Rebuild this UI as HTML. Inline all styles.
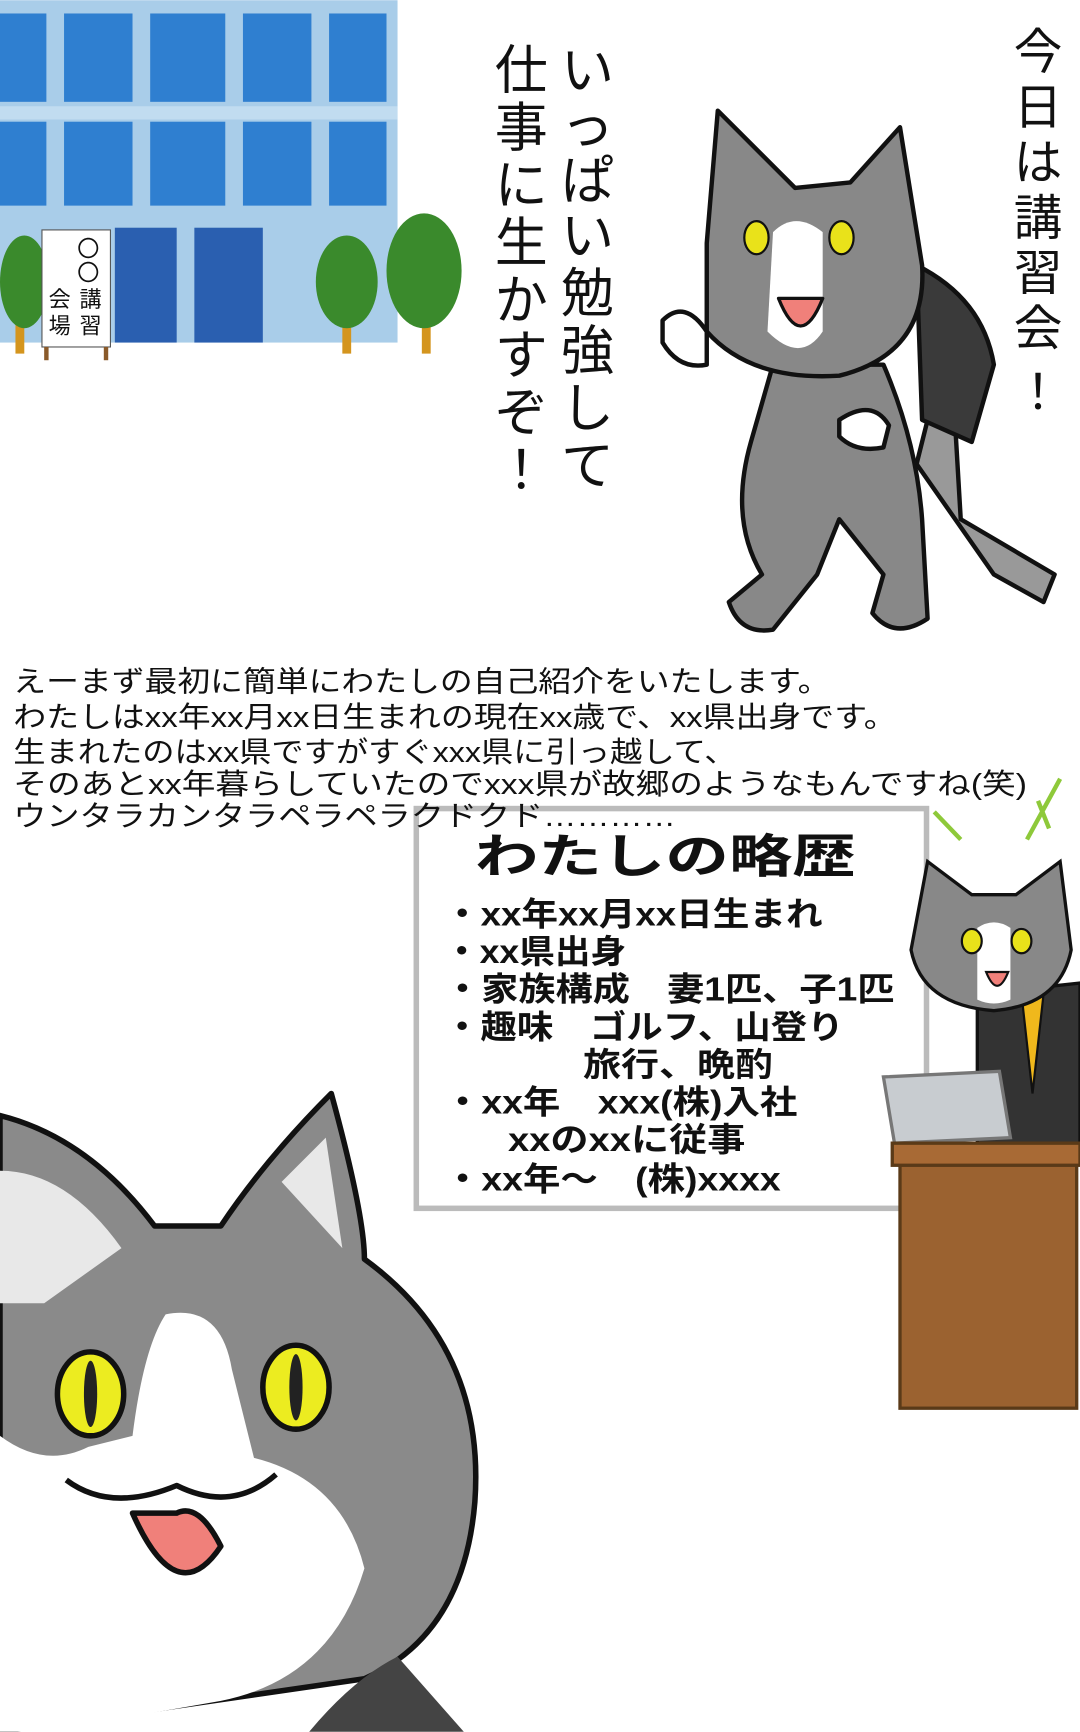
<!DOCTYPE html>
<html><head><meta charset="utf-8"><style>
html,body{margin:0;padding:0;background:#fff;width:1080px;height:1732px;overflow:hidden}
svg{display:block}
text{font-family:"Liberation Sans","Noto Sans CJK JP",sans-serif;fill:#111}
</style></head><body>
<svg width="1080" height="1732" viewBox="0 0 978 1568" xmlns="http://www.w3.org/2000/svg">
<!-- building -->
<rect x="0" y="0" width="360" height="310" fill="#a9cde9"/>
<g fill="#2f7fd0">
<rect x="0" y="12" width="42" height="80"/><rect x="58" y="12" width="62" height="80"/><rect x="136" y="12" width="68" height="80"/><rect x="220" y="12" width="62" height="80"/><rect x="298" y="12" width="52" height="80"/>
<rect x="0" y="110" width="42" height="76"/><rect x="58" y="110" width="62" height="76"/><rect x="136" y="110" width="68" height="76"/><rect x="220" y="110" width="62" height="76"/><rect x="298" y="110" width="52" height="76"/>
</g>
<rect x="0" y="96" width="360" height="12" fill="#c1dcf0"/>
<rect x="104" y="206" width="56" height="104" fill="#2a5fb0"/><rect x="176" y="206" width="62" height="104" fill="#2a5fb0"/>
<g fill="#d4951e"><rect x="14" y="260" width="8" height="60"/><rect x="310" y="260" width="8" height="60"/><rect x="382" y="260" width="8" height="60"/></g>
<g fill="#3a8a2c">
<ellipse cx="22" cy="255" rx="22" ry="42"/><ellipse cx="314" cy="255" rx="28" ry="42"/><ellipse cx="384" cy="245" rx="34" ry="52"/>
</g>
<rect x="38" y="208" width="62" height="106" fill="#fff" stroke="#555" stroke-width="1"/>
<rect x="40" y="314" width="4" height="12" fill="#8a5a2a"/><rect x="94" y="314" width="4" height="12" fill="#8a5a2a"/>
<g font-size="20"><text x="70" y="232">〇</text><text x="70" y="254">〇</text><text x="72" y="278">講</text><text x="72" y="302">習</text><text x="44" y="278">会</text><text x="44" y="302">場</text></g>
<!-- vertical texts -->
<g font-size="48">
<text x="508" y="80">い</text><text x="508" y="130">っ</text><text x="508" y="180">ぱ</text><text x="508" y="230">い</text><text x="508" y="282">勉</text><text x="508" y="334">強</text><text x="508" y="386">し</text><text x="508" y="438">て</text>
<text x="448" y="80">仕</text><text x="448" y="132">事</text><text x="448" y="184">に</text><text x="448" y="236">生</text><text x="448" y="288">か</text><text x="448" y="338">す</text><text x="448" y="390">ぞ</text><text x="448" y="442">！</text>
</g>
<g font-size="44">
<text x="918" y="62">今</text><text x="918" y="112">日</text><text x="918" y="162">は</text><text x="918" y="212">講</text><text x="918" y="262">習</text><text x="918" y="312">会</text><text x="918" y="370">！</text>
</g>
<!-- top cat -->
<g stroke="#111" stroke-width="4" stroke-linejoin="round">
<path d="M860 300 L870 470 L955 520 L945 545 L900 520 L830 420Z" fill="#999"/>
<path d="M830 240 Q890 270 900 330 L880 400 L835 380Z" fill="#3a3a3a"/>
<path d="M680 400 Q660 470 690 520 L660 545 Q670 575 700 570 L740 520 L760 470 L800 520 L790 555 Q810 580 840 560 L835 470 Q830 400 800 330 L700 330Z" fill="#888"/>
<path d="M640 220 L650 100 L720 170 L770 165 L815 115 L835 240 Q840 320 760 340 Q680 345 640 300Z" fill="#888"/>
<path d="M700 210 Q720 190 745 210 L745 300 Q725 330 695 300Z" fill="#fff" stroke="none"/>
<path d="M600 290 Q620 270 640 300 L640 330 Q615 335 600 310Z" fill="#fff"/>
<path d="M760 380 Q790 360 805 385 L800 405 Q775 410 760 395Z" fill="#fff"/>
<ellipse cx="685" cy="215" rx="11" ry="15" fill="#e9e21a" stroke-width="2"/>
<ellipse cx="762" cy="215" rx="11" ry="15" fill="#e9e21a" stroke-width="2"/>
<path d="M705 270 Q725 320 745 270Z" fill="#f0807a" stroke-width="3"/>
</g>
<!-- whiteboard -->
<rect x="377" y="732" width="462" height="362" fill="#fff" stroke="#bbb" stroke-width="5"/>
<text x="430" y="790" font-size="42" font-weight="bold" textLength="345" lengthAdjust="spacingAndGlyphs">わたしの略歴</text>
<g font-size="30" font-weight="bold">
<text x="402" y="838" textLength="343" lengthAdjust="spacingAndGlyphs">・xx年xx月xx日生まれ</text>
<text x="402" y="872" textLength="165" lengthAdjust="spacingAndGlyphs">・xx県出身</text>
<text x="402" y="906" textLength="408" lengthAdjust="spacingAndGlyphs">・家族構成　妻1匹、子1匹</text>
<text x="402" y="940" textLength="362" lengthAdjust="spacingAndGlyphs">・趣味　ゴルフ、山登り</text>
<text x="528" y="974" textLength="172" lengthAdjust="spacingAndGlyphs">旅行、晩酌</text>
<text x="402" y="1008" textLength="320" lengthAdjust="spacingAndGlyphs">・xx年　xxx(株)入社</text>
<text x="460" y="1042" textLength="215" lengthAdjust="spacingAndGlyphs">xxのxxに従事</text>
<text x="402" y="1078" textLength="305" lengthAdjust="spacingAndGlyphs">・xx年〜　(株)xxxx</text>
</g>
<!-- paragraph (over board) -->
<g font-size="26">
<text x="12" y="626" textLength="740" lengthAdjust="spacingAndGlyphs">えーまず最初に簡単にわたしの自己紹介をいたします。</text>
<text x="12" y="658" textLength="800" lengthAdjust="spacingAndGlyphs">わたしはxx年xx月xx日生まれの現在xx歳で、xx県出身です。</text>
<text x="12" y="690" textLength="655" lengthAdjust="spacingAndGlyphs">生まれたのはxx県ですがすぐxxx県に引っ越して、</text>
<text x="12" y="719" textLength="918" lengthAdjust="spacingAndGlyphs">そのあとxx年暮らしていたのでxxx県が故郷のようなもんですね(笑)</text>
<text x="12" y="748" textLength="600" lengthAdjust="spacingAndGlyphs">ウンタラカンタラペラペラクドクド…………</text>
</g>
<!-- presenter cat -->
<g stroke="#111" stroke-width="3">
<path d="M846 735 L870 760 M940 725 L950 750 M960 705 L930 760" stroke="#8ec93a" stroke-width="4"/>
<path d="M885 900 L978 890 L978 1040 L885 1040Z" fill="#333"/>
<path d="M925 900 L935 990 L945 900Z" fill="#f0b81c" stroke-width="2"/>
<path d="M825 860 L840 780 L880 810 L920 810 L960 780 L970 860 Q960 910 900 915 Q835 910 825 860Z" fill="#888"/>
<path d="M885 840 Q900 830 915 840 L915 905 Q900 912 885 905Z" fill="#fff" stroke="none"/>
<ellipse cx="880" cy="852" rx="9" ry="11" fill="#e9e21a" stroke-width="2"/>
<ellipse cx="925" cy="852" rx="9" ry="11" fill="#e9e21a" stroke-width="2"/>
<path d="M893 880 Q903 905 913 880Z" fill="#f0807a" stroke-width="2"/>
<path d="M800 975 L905 970 L915 1030 L810 1035Z" fill="#c8ccd0" stroke="#777"/>
<rect x="815" y="1035" width="160" height="240" fill="#9b6230" stroke="#5a3a18"/>
<rect x="808" y="1035" width="170" height="20" fill="#a86a35" stroke="#5a3a18"/>
</g>
<!-- big cat -->
<g stroke="#111" stroke-width="5" stroke-linejoin="round">
<path d="M0 1010 Q80 1030 140 1110 L200 1110 Q240 1050 300 990 Q330 1100 330 1140 Q440 1220 430 1360 Q420 1480 330 1520 L0 1568Z" fill="#8a8a8a"/>
<path d="M0 1060 Q60 1060 110 1130 L40 1180 L0 1180Z" fill="#e8e8e8" stroke="none"/>
<path d="M255 1070 L295 1030 L310 1130Z" fill="#e8e8e8" stroke="none"/>
<path d="M150 1190 Q200 1180 210 1240 L230 1320 Q310 1340 330 1420 Q300 1520 200 1540 L40 1568 L0 1568 L0 1300 Q40 1330 80 1310 L120 1300 Q130 1220 150 1190Z" fill="#fff" stroke="none"/>
<path d="M280 1568 Q320 1520 360 1500 L420 1568Z" fill="#444" stroke="none"/>
<ellipse cx="82" cy="1262" rx="30" ry="38" fill="#ecec20" stroke-width="5"/>
<ellipse cx="82" cy="1262" rx="6" ry="30" fill="#222" stroke="none"/>
<ellipse cx="268" cy="1256" rx="30" ry="38" fill="#ecec20" stroke-width="5"/>
<ellipse cx="268" cy="1256" rx="6" ry="30" fill="#222" stroke="none"/>
<path d="M120 1370 Q160 1460 200 1400 Q180 1360 160 1370Z" fill="#f0807a"/>
<path d="M60 1340 Q100 1370 160 1345 Q210 1370 250 1335" fill="none"/>
</g>
</svg>
</body></html>
